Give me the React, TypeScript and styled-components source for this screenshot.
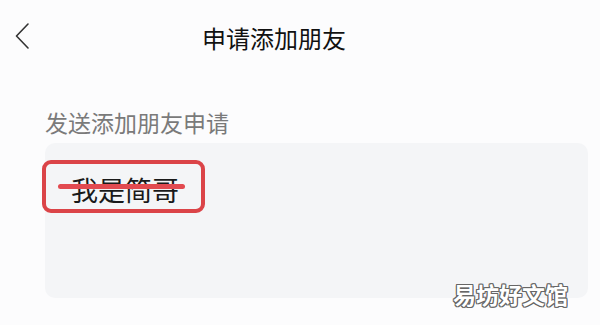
import styled, { createGlobalStyle } from "styled-components";

const GlobalStyle = createGlobalStyle`
  html, body {
    margin: 0;
    padding: 0;
    background: #fcfcfd;
  }
  body {
    font-family: "Noto Sans CJK SC", "Noto Sans", sans-serif;
  }
`;

const Page = styled.div`
  position: relative;
  width: 600px;
  height: 325px;
  overflow: hidden;
  background: #fcfcfd;
`;

const Header = styled.div`
  display: flex;
  align-items: center;
  height: 76px;
  padding-left: 15px;
`;

const Back = styled.button`
  display: flex;
  border: 0;
  padding: 0;
  background: none;
  margin-top: -5px;
  cursor: pointer;
`;

const Title = styled.h1`
  margin: 0 0 0 173px;
  font-size: 24px;
  line-height: 24px;
  font-weight: 400;
  color: #111;
`;

const Content = styled.div`
  padding: 0 12px 0 45px;
`;

const Label = styled.div`
  margin-top: 35px;
  font-size: 23px;
  line-height: 23px;
  color: #7a7a7a;
`;

const MessageBox = styled.div`
  margin-top: 9px;
  height: 155px;
  box-sizing: border-box;
  padding-top: 17px;
  background: #f4f5f7;
  border-radius: 10px;
`;

const Highlight = styled.div`
  position: relative;
  display: inline-block;
  margin-left: -3px;
  padding: 12px 22px 6px 25px;
  border: 4px solid #db4448;
  border-radius: 9px;
  font-size: 27px;
  line-height: 27px;
  color: #1a1a1a;
`;

const Strike = styled.span`
  position: absolute;
  left: 12px;
  top: 20px;
  width: 127px;
  height: 5px;
  border-radius: 3px;
  background: #e24a50;
`;

const Watermark = styled.div`
  position: absolute;
  right: 32px;
  bottom: 19px;
  font-size: 23px;
  line-height: 23px;
  font-weight: 700;
  color: #fff;
  text-shadow:
    1px 0 0 #666, -1px 0 0 #666, 0 1px 0 #666, 0 -1px 0 #666,
    1px 1px 0 #666, -1px -1px 0 #666, 1px -1px 0 #666, -1px 1px 0 #666;
`;

export default function App() {
  return (
    <Page>
      <GlobalStyle />
      <Header>
        <Back aria-label="返回">
          <svg width="14" height="26" viewBox="0 0 14 26">
            <path
              d="M13 1 L1.5 13 L13 25"
              fill="none"
              stroke="#333"
              strokeWidth="1.6"
              strokeLinecap="round"
              strokeLinejoin="round"
            />
          </svg>
        </Back>
        <Title>申请添加朋友</Title>
      </Header>
      <Content>
        <Label>发送添加朋友申请</Label>
        <MessageBox>
          <Highlight>
            我是简哥
            <Strike />
          </Highlight>
        </MessageBox>
      </Content>
      <Watermark>易坊好文馆</Watermark>
    </Page>
  );
}
